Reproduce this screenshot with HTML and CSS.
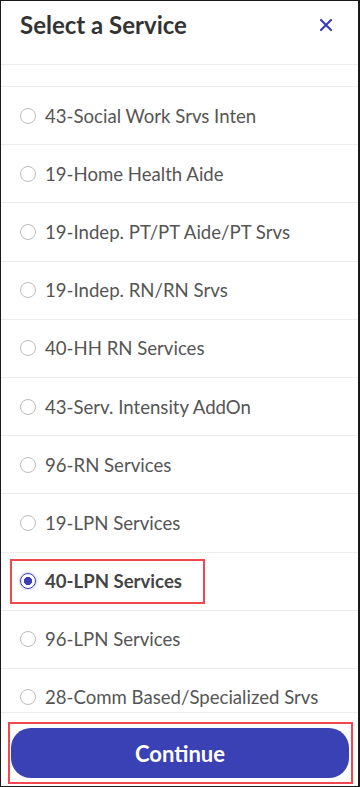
FILE: index.html
```html
<!DOCTYPE html>
<html>
<head>
<meta charset="utf-8">
<link rel="stylesheet" href="styles.css">
</head>
<body>
<div class="sheet">
  <header class="header">
    <h1 class="title">Select a Service</h1>
    <svg class="close" width="14" height="14" viewBox="0 0 14 14"><path d="M2 2 L12 12 M12 2 L2 12" stroke="#3a3fb5" stroke-width="2.2" stroke-linecap="round"/></svg>
  </header>
  <div class="list">
    <div class="spacer"></div>
    <div class="row"><span class="radio"></span><span class="label">43-Social Work Srvs Inten</span></div>
    <div class="row"><span class="radio"></span><span class="label">19-Home Health Aide</span></div>
    <div class="row"><span class="radio"></span><span class="label">19-Indep. PT/PT Aide/PT Srvs</span></div>
    <div class="row"><span class="radio"></span><span class="label">19-Indep. RN/RN Srvs</span></div>
    <div class="row"><span class="radio"></span><span class="label">40-HH RN Services</span></div>
    <div class="row"><span class="radio"></span><span class="label">43-Serv. Intensity AddOn</span></div>
    <div class="row"><span class="radio"></span><span class="label">96-RN Services</span></div>
    <div class="row"><span class="radio"></span><span class="label">19-LPN Services</span></div>
    <div class="row selected"><span class="radio on"></span><span class="label">40-LPN Services</span><span class="mark"></span></div>
    <div class="row"><span class="radio"></span><span class="label">96-LPN Services</span></div>
    <div class="row"><span class="radio"></span><span class="label">28-Comm Based/Specialized Srvs</span></div>
  </div>
  <footer class="footer">
    <div class="mark-box"><button class="continue">Continue</button></div>
  </footer>
</div>
</body>
</html>
```
FILE: styles.css
```css
* { box-sizing: border-box; }
html, body { margin: 0; padding: 0; background: #fff; }
body { font-family: Lato, "Open Sans", sans-serif; }
.sheet {
  width: 360px;
  height: 787px;
  border: 1px solid #1a1a1a;
  border-right-width: 2px;
  display: flex;
  flex-direction: column;
  overflow: hidden;
  background: #fff;
}
.header {
  height: 64px;
  flex: none;
  display: flex;
  align-items: center;
  justify-content: space-between;
  padding: 0 25px 16px 19px;
  border-bottom: 1px solid #ececec;
}
.title {
  margin: 0;
  font-size: 24px;
  font-weight: 700;
  color: #333;
}
.close { display: block; }
.list {
  flex: 1;
  overflow: hidden;
  display: flex;
  flex-direction: column;
}
.spacer {
  flex: none;
  height: 22px;
  border-bottom: 1px solid #ececec;
}
.row {
  flex: none;
  position: relative;
  height: 58.2px;
  display: flex;
  align-items: center;
  padding-left: 19px;
  border-bottom: 1px solid #ececec;
}
.radio {
  width: 16px;
  height: 16px;
  border-radius: 50%;
  border: 1px solid #bcbcbc;
  margin-right: 9px;
  flex: none;
}
.radio.on {
  border: 1.5px solid #3a3fb5;
  background: radial-gradient(circle, #3a3fb5 0 3.8px, #fff 4.4px);
  box-shadow: 0 0 2px 1px rgba(58, 63, 181, 0.25);
}
.label {
  font-size: 18.6px;
  color: #555;
}
.selected .label { font-weight: 700; color: #444; }
.mark {
  position: absolute;
  left: 9px;
  top: 6px;
  width: 195px;
  height: 45px;
  border: 2px solid #f0484e;
}
.footer {
  flex: none;
  height: 74px;
  border-top: 1px solid #ececec;
  padding: 9px 5px 0 7px;
}
.mark-box {
  border: 2px solid #f0484e;
  padding: 4px 2px 4px 1px;
  height: 62px;
}
.continue {
  display: block;
  width: 100%;
  height: 50px;
  border: none;
  border-radius: 20px;
  background: #3a41b5;
  color: #fff;
  font-family: Lato, sans-serif;
  font-size: 22px;
  font-weight: 700;
}
```
